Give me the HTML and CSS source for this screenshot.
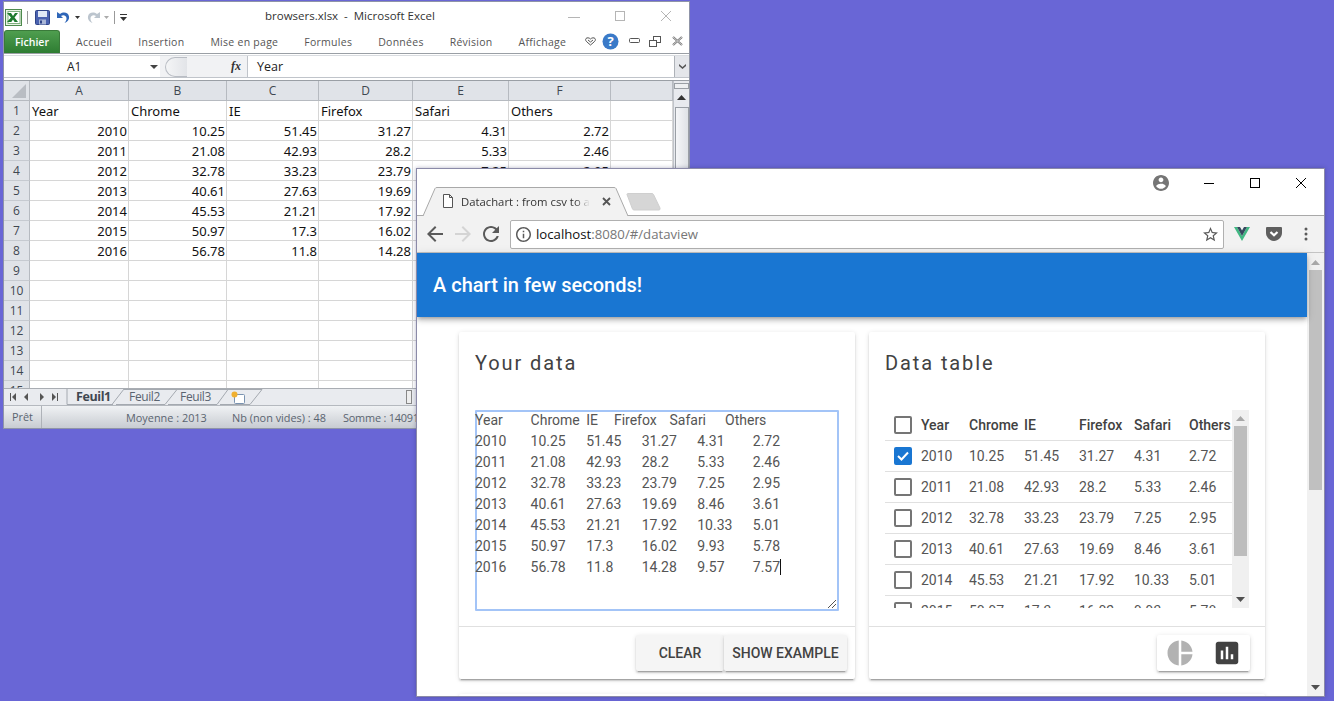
FILE: index.html
```html
<!DOCTYPE html>
<html lang="fr">
<head>
<meta charset="utf-8">
<title>Datachart</title>
<link rel="stylesheet" href="styles.css">
</head>
<body>
<section class="excel">
  <header class="x-title">
    <div class="x-qat">
      <svg class="x-logo" width="17" height="17" viewBox="0 0 17 17"><rect x=".5" y=".5" width="16" height="16" fill="#e8f2e4" stroke="#4e8a4e"/><rect x="3" y="2.500" width="12" height="12" fill="#fff" stroke="#7fb07f"/><path d="M2 4h4l2 3 2-3h3l-3.500 4.500L13 13H9.600L8 10.500 6.300 13H2l4-4.500z" fill="#1e7a2e"/></svg>
      <i class="x-sep"></i>
      <svg width="15" height="15" viewBox="0 0 15 15"><rect x=".5" y=".5" width="14" height="14" rx="1" fill="#4a62b0" stroke="#2f4488"/><rect x="3" y="1" width="9" height="6" fill="#dfe8f6"/><rect x="4" y="9.500" width="7" height="5" fill="#a9b6d6"/><rect x="5" y="10.500" width="2" height="3" fill="#2f4488"/></svg>
      <svg class="x-undo" width="14" height="13" viewBox="0 0 14 13"><path d="M1 1v6h6L5 5c2-1.500 5-1 5.500 2 .2 1.500-.5 3.500-2 5 3-1 5-3.500 4.500-6.500C12.500 2 8 0 4 3z" fill="#2f66b8"/></svg>
      <svg class="x-caret" width="5" height="3" viewBox="0 0 5 3"><path d="M0 0h5L2.500 3z" fill="#333"/></svg>
      <svg class="x-redo" width="14" height="13" viewBox="0 0 14 13"><path d="M13 1v6H7l2-2C7 3.500 4 4 3.500 7c-.2 1.500.5 3.500 2 5-3-1-5-3.500-4.500-6.500C1.500 2 6 0 10 3z" fill="#bcc5ce"/></svg>
      <svg class="x-caret" width="5" height="3" viewBox="0 0 5 3"><path d="M0 0h5L2.500 3z" fill="#aaa"/></svg>
      <i class="x-sep"></i>
      <svg class="x-custom" width="7" height="7" viewBox="0 0 7 7"><path d="M0 0h7v1H0zM0 3h7L3.500 7z" fill="#333"/></svg>
    </div>
    <div class="x-name">browsers.xlsx  -  Microsoft Excel</div>
    <div class="x-winctl">
      <svg width="12" height="12" viewBox="0 0 12 12"><path d="M0 7.500h12" stroke="#b5b5b5"/></svg>
      <svg width="10" height="10" viewBox="0 0 10 10"><rect x=".5" y=".5" width="9" height="9" fill="none" stroke="#b5b5b5"/></svg>
      <svg width="12" height="12" viewBox="0 0 12 12"><path d="M1 1l10 10M11 1L1 11" stroke="#b5b5b5"/></svg>
    </div>
  </header>
  <nav class="x-ribbon">
    <div class="x-file">Fichier</div>
    <div class="x-tabs">
      <span>Accueil</span><span>Insertion</span><span>Mise en page</span><span>Formules</span><span>Données</span><span>Révision</span><span>Affichage</span>
    </div>
    <div class="x-ribbon-ctl">
      <svg width="11" height="9" viewBox="0 0 11 9"><path d="M1 1.500C2 .5 4 .5 5.500 2 7 .5 9 .5 10 1.500c1 1.500 0 2.500-1 3.500L5.500 8 2 5C1 4 0 3 1 1.500zM3 3l2.500 2L8 3" fill="none" stroke="#555"/></svg>
      <svg class="r-help" width="17" height="17" viewBox="0 0 17 17"><circle cx="8.500" cy="8.500" r="8" fill="#3a7ac8"/><text x="8.500" y="13" text-anchor="middle" class="x-help-q">?</text></svg>
      <svg class="r-min" width="11" height="6" viewBox="0 0 11 6"><rect x=".5" y=".5" width="10" height="4" rx="1" fill="#fff" stroke="#555"/></svg>
      <svg class="r-res" width="12" height="11" viewBox="0 0 12 11"><rect x="4.500" y=".5" width="7" height="6" fill="#fff" stroke="#555"/><rect x=".5" y="4.500" width="7" height="6" fill="#fff" stroke="#555"/></svg>
      <svg class="r-close" width="11" height="10" viewBox="0 0 11 10"><path d="M1 1l9 8M10 1L1 9" stroke="#777" stroke-width="2.200"/><path d="M1 1l9 8M10 1L1 9" stroke="#eee" stroke-width=".7"/></svg>
    </div>
  </nav>
  <div class="x-formula">
    <div class="x-namebox"><span>A1</span><svg width="8" height="4" viewBox="0 0 8 4"><path d="M0 0h8L4 4z" fill="#444"/></svg></div>
    <div class="x-fx-wrap"><i class="x-pill"></i><em class="x-fx">fx</em></div>
    <div class="x-input">Year</div>
    <div class="x-expand"><svg width="9" height="5" viewBox="0 0 9 5"><path d="M1 0l3.500 3L8 0v2L4.500 5 1 2z" fill="#555"/></svg></div>
  </div>
  <div class="x-body">
    <div class="x-grid">
      <div class="hd corner"><svg width="14" height="14" viewBox="0 0 14 14"><path d="M14 0v14H0z" fill="#b9bdc3"/></svg></div>
      <div class="hd">A</div><div class="hd">B</div><div class="hd">C</div><div class="hd">D</div><div class="hd">E</div><div class="hd">F</div><div class="hd"></div>

      <div class="rh">1</div><div class="c">Year</div><div class="c">Chrome</div><div class="c">IE</div><div class="c">Firefox</div><div class="c">Safari</div><div class="c">Others</div><div class="c"></div>
      <div class="rh">2</div><div class="c n">2010</div><div class="c n">10.25</div><div class="c n">51.45</div><div class="c n">31.27</div><div class="c n">4.31</div><div class="c n">2.72</div><div class="c"></div>
      <div class="rh">3</div><div class="c n">2011</div><div class="c n">21.08</div><div class="c n">42.93</div><div class="c n">28.2</div><div class="c n">5.33</div><div class="c n">2.46</div><div class="c"></div>
      <div class="rh">4</div><div class="c n">2012</div><div class="c n">32.78</div><div class="c n">33.23</div><div class="c n">23.79</div><div class="c n">7.25</div><div class="c n">2.95</div><div class="c"></div>
      <div class="rh">5</div><div class="c n">2013</div><div class="c n">40.61</div><div class="c n">27.63</div><div class="c n">19.69</div><div class="c n">8.46</div><div class="c n">3.61</div><div class="c"></div>
      <div class="rh">6</div><div class="c n">2014</div><div class="c n">45.53</div><div class="c n">21.21</div><div class="c n">17.92</div><div class="c n">10.33</div><div class="c n">5.01</div><div class="c"></div>
      <div class="rh">7</div><div class="c n">2015</div><div class="c n">50.97</div><div class="c n">17.3</div><div class="c n">16.02</div><div class="c n">9.93</div><div class="c n">5.78</div><div class="c"></div>
      <div class="rh">8</div><div class="c n">2016</div><div class="c n">56.78</div><div class="c n">11.8</div><div class="c n">14.28</div><div class="c n">9.57</div><div class="c n">7.57</div><div class="c"></div>
      <div class="rh">9</div><div class="c"></div><div class="c"></div><div class="c"></div><div class="c"></div><div class="c"></div><div class="c"></div><div class="c"></div>
      <div class="rh">10</div><div class="c"></div><div class="c"></div><div class="c"></div><div class="c"></div><div class="c"></div><div class="c"></div><div class="c"></div>
      <div class="rh">11</div><div class="c"></div><div class="c"></div><div class="c"></div><div class="c"></div><div class="c"></div><div class="c"></div><div class="c"></div>
      <div class="rh">12</div><div class="c"></div><div class="c"></div><div class="c"></div><div class="c"></div><div class="c"></div><div class="c"></div><div class="c"></div>
      <div class="rh">13</div><div class="c"></div><div class="c"></div><div class="c"></div><div class="c"></div><div class="c"></div><div class="c"></div><div class="c"></div>
      <div class="rh">14</div><div class="c"></div><div class="c"></div><div class="c"></div><div class="c"></div><div class="c"></div><div class="c"></div><div class="c"></div>
      <div class="rh">15</div><div class="c"></div><div class="c"></div><div class="c"></div><div class="c"></div><div class="c"></div><div class="c"></div><div class="c"></div>
    </div>
    <div class="x-vscroll">
      <i class="x-split"></i>
      <svg class="x-up" width="9" height="5" viewBox="0 0 9 5"><path d="M4.500 0L9 5H0z" fill="#333"/></svg>
      <i class="x-thumb"></i>
    </div>
  </div>
  <div class="x-sheets">
    <svg class="x-slants" width="270" height="16" viewBox="0 0 270 16"><path d="M63 0V15.500H108L120 0M108 15.500H109M120 .5H173L161 15.500H112M173 .5H224L213 15.500H164M224 .5H258L246 15.500H216" fill="none" stroke="#a4a9b0"/></svg>
    <div class="x-nav">
      <svg width="50" height="8" viewBox="0 0 50 8"><path d="M1 0h1v8H1zM7 0v8L3 4zM19 0v8l-4-4zM31 0v8l4-4zM43 0v8l4-4zM48 0h1v8h-1z" fill="#555"/></svg>
    </div>
    <span class="x-sheet active">Feuil1</span>
    <span class="x-sheet">Feuil2</span>
    <span class="x-sheet">Feuil3</span>
    <span class="x-sheet x-new"><svg width="14" height="13" viewBox="0 0 14 13"><rect x="3.500" y="3.500" width="10" height="9" rx="1" fill="#fff" stroke="#7a93b0"/><circle cx="3.500" cy="3.500" r="3" fill="#f0b030"/></svg></span>
    <i class="x-hthumb"></i>
  </div>
  <footer class="x-status">
    <span class="x-ready">Prêt</span>
    <span class="x-avg">Moyenne : 2013</span>
    <span class="x-count">Nb (non vides) : 48</span>
    <span class="x-sum">Somme : 14091</span>
  </footer>
</section>

<section class="chrome">
  <div class="tabstrip">
    <div class="tab">
      <svg class="tab-bg" width="206" height="29" viewBox="0 0 206 29"><path d="M0 29L12 1.500Q12.500 .5 14 .5H191Q192.500 .5 193 1.500L205 29" fill="#f2f2f2" stroke="#a9a9a9"/></svg>
      <svg class="tab-doc" width="12" height="14" viewBox="0 0 12 14"><path d="M1.500 .5h6l3 3v10h-9zM7.500 .5v3h3" fill="#fff" stroke="#555"/></svg>
      <span class="tab-title">Datachart : from csv to a</span>
      <svg class="tab-close" width="9" height="9" viewBox="0 0 9 9"><path d="M1 1l7 7M8 1L1 8" stroke="#555" stroke-width="1.800"/></svg>
    </div>
    <svg class="newtab" width="35" height="18" viewBox="0 0 35 18"><path d="M1 1.500Q1 .5 2 .5H26Q27 .5 27.500 1.500L34 15Q34.500 17 33 17H8Q7 17 6.500 16z" fill="#d6d6d6" stroke="#cfcfcf"/></svg>
    <div class="winctl">
      <svg class="w-user" width="16" height="16" viewBox="2 2 20 20"><path d="M12 2C6.480 2 2 6.480 2 12s4.480 10 10 10 10-4.480 10-10S17.520 2 12 2zm0 3c1.660 0 3 1.340 3 3s-1.340 3-3 3-3-1.340-3-3 1.340-3 3-3zm0 14.200c-2.500 0-4.710-1.280-6-3.220.03-1.990 4-3.080 6-3.080 1.990 0 5.970 1.090 6 3.080-1.290 1.940-3.500 3.220-6 3.220z" fill="#757575"/></svg>
      <svg class="w-min" width="10" height="10" viewBox="0 0 10 10"><path d="M0 5.500h10" stroke="#000"/></svg>
      <svg class="w-max" width="10" height="10" viewBox="0 0 10 10"><rect x=".5" y=".5" width="9" height="9" fill="none" stroke="#000"/></svg>
      <svg class="w-close" width="10" height="10" viewBox="0 0 10 10"><path d="M0 0l10 10M10 0L0 10" stroke="#000"/></svg>
    </div>
  </div>
  <div class="toolbar">
    <svg width="20" height="20" viewBox="2 2 20 20" class="t-back"><path d="M20 11H7.830l5.590-5.590L12 4l-8 8 8 8 1.410-1.410L7.830 13H20v-2z" fill="#5a5a5a"/></svg>
    <svg width="20" height="20" viewBox="2 2 20 20" class="t-fwd"><path d="M12 4l-1.410 1.410L16.170 11H4v2h12.170l-5.580 5.590L12 20l8-8z" fill="#d4d4d4"/></svg>
    <svg width="20" height="20" viewBox="2 2 20 20" class="t-reload"><path d="M17.650 6.350C16.200 4.900 14.210 4 12 4c-4.420 0-7.990 3.580-7.990 8s3.570 8 7.990 8c3.730 0 6.840-2.550 7.730-6h-2.080c-.82 2.330-3.040 4-5.650 4-3.310 0-6-2.690-6-6s2.690-6 6-6c1.660 0 3.140.69 4.220 1.780L13 11h7V4l-2.350 2.350z" fill="#5a5a5a"/></svg>
    <div class="omnibox">
      <svg width="15" height="15" viewBox="2 2 20 20"><path d="M11 7h2v2h-2zm0 4h2v6h-2zm1-9C6.480 2 2 6.480 2 12s4.480 10 10 10 10-4.480 10-10S17.520 2 12 2zm0 18c-4.410 0-8-3.590-8-8s3.590-8 8-8 8 3.590 8 8-3.590 8-8 8z" fill="#5a5a5a"/></svg>
      <span class="url"><b>localhost</b>:8080/#/dataview</span>
      <svg class="star" width="15" height="15" viewBox="2 2 20 20"><path d="M22 9.240l-7.190-.62L12 2 9.190 8.630 2 9.240l5.460 4.730L5.820 21 12 17.270 18.180 21l-1.630-7.030L22 9.240zM12 15.400l-3.760 2.270 1-4.280-3.320-2.880 4.380-.38L12 6.100l1.710 4.040 4.380.38-3.320 2.880 1 4.280L12 15.400z" fill="#5a5a5a"/></svg>
    </div>
    <svg class="t-vue" width="16" height="14" viewBox="0 0 16 14"><path d="M0 0h3l5 9 5-9h3L8 14z" fill="#41b883"/><path d="M3 0h3l2 3.500L10 0h3L8 9z" fill="#35495e"/></svg>
    <svg class="t-pocket" width="16" height="14" viewBox="0 0 16 14"><path d="M1 0h14q1 0 1 1v5c0 4-4 8-8 8s-8-4-8-8V1q0-1 1-1z" fill="#5f5f5f"/><path d="M4.500 5L8 8.300 11.500 5" fill="none" stroke="#fff" stroke-width="2.200"/></svg>
    <svg class="t-menu" width="4" height="14" viewBox="0 0 4 14"><circle cx="2" cy="2" r="1.500" fill="#5a5a5a"/><circle cx="2" cy="7" r="1.500" fill="#5a5a5a"/><circle cx="2" cy="12" r="1.500" fill="#5a5a5a"/></svg>
  </div>
  <div class="viewport">
    <div class="page">
      <div class="appbar">A chart in few seconds!</div>
      <main class="cards">
        <article class="card">
          <h2 class="card-title">Your data</h2>
          <div class="card-body data-body">
            <div class="datatext">Year	Chrome	IE	Firefox	Safari	Others
2010	10.25	51.45	31.27	4.31	2.72
2011	21.08	42.93	28.2	5.33	2.46
2012	32.78	33.23	23.79	7.25	2.95
2013	40.61	27.63	19.69	8.46	3.61
2014	45.53	21.21	17.92	10.33	5.01
2015	50.97	17.3	16.02	9.93	5.78
2016	56.78	11.8	14.28	9.57	7.57<i class="caret"></i><svg class="grip" width="10" height="10" viewBox="0 0 10 10"><path d="M9 1L1 9M9 5L5 9" stroke="#555"/></svg></div>
          </div>
          <div class="card-actions">
            <button class="btn btn-clear">Clear</button>
            <button class="btn btn-example">Show example</button>
          </div>
        </article>
        <article class="card">
          <h2 class="card-title">Data table</h2>
          <div class="card-body table-body">
            <div class="tablewrap">
              <div class="trow thead"><i class="cb"></i><span>Year</span><span>Chrome</span><span>IE</span><span>Firefox</span><span>Safari</span><span>Others</span></div>
              <div class="trow"><i class="cb on"><svg width="14" height="14" viewBox="0 0 14 14"><path d="M2 7l3.500 3.500L12 3.500" fill="none" stroke="#fff" stroke-width="2"/></svg></i><span>2010</span><span>10.25</span><span>51.45</span><span>31.27</span><span>4.31</span><span>2.72</span></div>
              <div class="trow"><i class="cb"></i><span>2011</span><span>21.08</span><span>42.93</span><span>28.2</span><span>5.33</span><span>2.46</span></div>
              <div class="trow"><i class="cb"></i><span>2012</span><span>32.78</span><span>33.23</span><span>23.79</span><span>7.25</span><span>2.95</span></div>
              <div class="trow"><i class="cb"></i><span>2013</span><span>40.61</span><span>27.63</span><span>19.69</span><span>8.46</span><span>3.61</span></div>
              <div class="trow"><i class="cb"></i><span>2014</span><span>45.53</span><span>21.21</span><span>17.92</span><span>10.33</span><span>5.01</span></div>
              <div class="trow"><i class="cb"></i><span>2015</span><span>50.97</span><span>17.3</span><span>16.02</span><span>9.93</span><span>5.78</span></div>
            </div>
            <div class="tscroll">
              <svg width="9" height="5" viewBox="0 0 9 5"><path d="M4.500 0L9 5H0z" fill="#a8a8a8"/></svg>
              <i class="tthumb"></i>
              <svg class="tdown" width="9" height="5" viewBox="0 0 9 5"><path d="M0 0h9L4.500 5z" fill="#505050"/></svg>
            </div>
          </div>
          <div class="card-actions">
            <div class="toggle">
              <svg width="30" height="30" viewBox="0 0 24 24"><path d="M11 2v20c-5.070-.5-9-4.790-9-10s3.930-9.500 9-10zm2.030 0v8.990H22c-.47-4.740-4.240-8.520-8.970-8.990zm0 11.010V22c4.740-.47 8.500-4.250 8.970-8.990h-8.970z" fill="#b2b2b2"/></svg>
              <svg width="30" height="30" viewBox="0 0 24 24"><path d="M19 3H5c-1.100 0-2 .9-2 2v14c0 1.100.9 2 2 2h14c1.100 0 2-.9 2-2V5c0-1.100-.9-2-2-2zM9 17H7v-7h2v7zm4 0h-2V7h2v10zm4 0h-2v-4h2v4z" fill="#424242"/></svg>
            </div>
          </div>
        </article>
      </main>
      <div class="card next-card"></div>
    </div>
    <div class="pscroll">
      <svg width="9" height="5" viewBox="0 0 9 5"><path d="M4.500 0L9 5H0z" fill="#a8a8a8"/></svg>
      <i class="pthumb"></i>
      <svg class="pdown" width="9" height="5" viewBox="0 0 9 5"><path d="M0 0h9L4.500 5z" fill="#505050"/></svg>
    </div>
  </div>
</section>
</body>
</html>
```
FILE: styles.css
```css
* { box-sizing: border-box; }
html, body { margin: 0; height: 100%; overflow: hidden; }
body { background: #6966d6; width: 1334px; height: 701px; position: relative; font-family: "Roboto", sans-serif; }
i, em { display: block; font-style: normal; }
svg { display: block; flex: none; }

/* Excel window */
.excel {
  position: absolute; left: 3px; top: 1px; width: 687px; height: 428px;
  background: #fff; border: 1px solid #8f94a8; display: flex; flex-direction: column;
  font-family: "Open Sans", "Liberation Sans", sans-serif; color: #3b3b3b; overflow: hidden;
}
.x-title { height: 28px; display: flex; align-items: center; position: relative; flex: none; }
.x-qat { display: flex; align-items: center; padding-left: 1px; padding-top: 3px; }
.x-sep { width: 1px; height: 13px; background: #999; margin: 0 7px 0 5px; }
.x-undo { margin-left: 6px; margin-right: 2px; }
.x-caret { margin-left: 3px; }
.x-redo { margin-left: 7px; }
.x-custom { margin-left: -2px; }
.x-name { position: absolute; left: 261px; top: 6px; font-size: 11.5px; color: #333; white-space: pre; }
.x-winctl { position: absolute; left: 564px; top: 8px; display: flex; align-items: center; gap: 35px; }
.x-ribbon { height: 24px; display: flex; align-items: flex-end; flex: none; border-bottom: 1px solid #9a9fa5; position: relative; }
.x-file {
  width: 56px; height: 23px; background: linear-gradient(#4f9e4f, #2e7d32); border: 1px solid #3a7a3a; border-bottom: 0;
  border-radius: 3px 3px 0 0; color: #fff; font-size: 10.5px; font-weight: 600; text-align: center; line-height: 22px;
}
.x-tabs { display: flex; gap: 26px; padding-left: 16px; font-size: 10.5px; line-height: 22px; color: #555; letter-spacing: .27px; }
.x-ribbon-ctl { position: absolute; left: 581px; top: 1px; display: flex; align-items: center; height: 20px; }
.r-help { margin-left: 6px; }
.r-min { margin-left: 10px; }
.r-res { margin-left: 9px; }
.r-close { margin-left: 11px; }
.x-help-q { font: 700 13px "Open Sans", sans-serif; fill: #fff; }
.x-formula { height: 23px; display: flex; flex: none; margin-top: 1px; background: #fff; border-top: 1px solid #d9dce0; border-bottom: 1px solid #c0c4ca; }
.x-namebox { width: 156px; display: flex; align-items: center; font-size: 12px; padding-left: 63px; padding-right: 2px; justify-content: space-between; color: #222; }
.x-fx-wrap { width: 88px; display: flex; align-items: center; justify-content: space-between; background: #f1f2f4; border-right: 1px solid #c0c4ca; padding: 0 6px 0 5px; }
.x-pill { width: 22px; height: 20px; border-radius: 12px 0 0 12px; background: linear-gradient(90deg, #f4f5f6, #e2e4e8); border: 1px solid #b9bdc4; border-right: 0; }
.x-fx { font: italic 700 12px "Liberation Serif", serif; color: #333; }
.x-input { flex: 1; font-size: 12.5px; padding-left: 9px; line-height: 21px; color: #222; }
.x-expand { width: 15px; display: flex; align-items: center; justify-content: center; background: #e4e6ea; border-left: 1px solid #aeb2b8; }
.x-body { flex: 1; display: flex; min-height: 0; margin-top: 2px; border-top: 1px solid #9a9fa5; overflow: hidden; }
.x-grid {
  display: grid; grid-template-columns: 26px 99px 98px 92px 94px 96px 102px 62px; grid-auto-rows: 20px;
  font-family: "Noto Sans", sans-serif; font-size: 13px; color: #111; align-content: start; flex: none;
}
.hd { background: #e0e3e8; border-right: 1px solid #b6bac0; border-bottom: 1px solid #b6bac0; text-align: center; line-height: 19px; font-size: 12px; color: #3f4750; font-family: "Open Sans", sans-serif; }
.corner { display: flex; align-items: flex-end; justify-content: flex-end; padding: 0 3px 2px 0; }
.rh { background: #e0e3e8; border-right: 1px solid #b6bac0; border-bottom: 1px solid #c6cad0; text-align: center; line-height: 19px; font-size: 12px; color: #3f4750; font-family: "Open Sans", sans-serif; }
.c { border-right: 1px solid #d6d6d6; border-bottom: 1px solid #d6d6d6; padding: 0 1px 0 2px; line-height: 20px; white-space: nowrap; overflow: hidden; }
.n { text-align: right; }
.x-vscroll { flex: 1; background: #e8eaee; border-left: 1px solid #c0c4ca; display: flex; flex-direction: column; align-items: center; }
.x-split { width: 15px; height: 6px; margin-top: 2px; background: #eef0f2; border: 1px solid #9a9fa5; }
.x-up { margin-top: 6px; }
.x-thumb { width: 14px; flex: 1; margin-top: 7px; background: linear-gradient(90deg, #f5f6f8, #dfe2e6); border: 1px solid #9a9fa5; }
.x-sheets { height: 17px; flex: none; display: flex; background: #e9ebef; border-top: 1px solid #a9adb3; font-size: 12px; line-height: 15px; color: #5a6470; position: relative; }
.x-slants { position: absolute; left: 0; top: 0; }
.x-nav { width: 63px; padding: 4px 0 0 5px; position: relative; }
.x-sheet { width: 51px; text-align: center; letter-spacing: -.4px; position: relative; }
.x-sheet.active { width: 51px; font-weight: 700; color: #3f4750; margin-right: 1px; padding-left: 9px; text-align: left; font-size: 12.5px; }
.x-new { display: flex; justify-content: center; align-items: center; width: 37px; padding-right: 3px; }
.x-hthumb { position: absolute; left: 402px; top: 1px; width: 6px; height: 14px; background: #eee; border: 1px solid #888; }
.x-status { height: 23px; flex: none; display: flex; align-items: center; background: linear-gradient(#f0f2f4, #c8ccd2); font-size: 10.9px; color: #5a6470; position: relative; border-top: 1px solid #b5b9bf; white-space: nowrap; }
.x-ready { width: 38px; height: 100%; padding-left: 8px; line-height: 21px; border-right: 1px solid #aeb2b8; flex: none; }
.x-avg { margin-left: 84px; width: 106px; flex: none; }
.x-count { width: 111px; flex: none; }
.x-sum { flex: none; letter-spacing: -.2px; }

/* Chrome window */
.chrome {
  position: absolute; left: 416px; top: 168px; width: 909px; height: 529px;
  border: 1px solid #8b8aa8; background: #fff; display: flex; flex-direction: column; overflow: hidden;
  box-shadow: 0 0 4px rgba(40,40,90,.35);
}
.tabstrip { height: 47px; flex: none; background: #fff; border-bottom: 1px solid #a9a9a9; position: relative; display: flex; align-items: flex-end; padding-left: 6px; }
.tab { width: 206px; height: 29px; position: relative; display: flex; align-items: center; margin-bottom: -1px; padding: 0 0 1px 19px; font-family: "Open Sans", sans-serif; font-size: 11.3px; color: #333; }
.tab-bg { position: absolute; left: 0; top: 0; }
.tab-doc { position: relative; margin-right: 7px; }
.tab-title { position: relative; width: 129px; white-space: nowrap; overflow: hidden; -webkit-mask-image: linear-gradient(90deg, #000 88%, transparent); mask-image: linear-gradient(90deg, #000 88%, transparent); }
.tab-close { position: relative; margin-left: 12px; }
.newtab { margin: 0 0 4px -3px; }
.winctl { position: absolute; top: 6px; left: 736px; display: flex; align-items: center; height: 16px; }
.w-min { margin-left: 35px; }
.w-max { margin-left: 36px; }
.w-close { margin-left: 36px; }
.toolbar { height: 37px; flex: none; background: #f2f2f2; border-bottom: 1px solid #c4c4c4; display: flex; align-items: center; padding-left: 8px; }
.t-fwd { margin-left: 8px; }
.t-reload { margin-left: 8px; }
.omnibox { width: 714px; height: 29px; margin-left: 9px; background: #fff; border: 1px solid #b0b0b0; border-radius: 2px; display: flex; align-items: center; padding: 0 5px 0 5px; }
.url { font-family: "Open Sans", sans-serif; font-size: 13.2px; color: #777; margin-left: 5px; flex: 1; }
.url b { font-weight: 400; color: #111; }
.t-vue { margin-left: 10px; }
.t-pocket { margin-left: 16px; }
.t-menu { margin-left: 22px; }
.viewport { flex: 1; display: flex; min-height: 0; }
.page { width: 890px; flex: none; background: #fff; display: flex; flex-direction: column; }
.appbar { height: 64px; flex: none; background: #1976d2; color: #fff; font-size: 20px; font-weight: 500; line-height: 64px; padding-left: 16px; box-shadow: 0 2px 4px -1px rgba(0,0,0,.25), 0 4px 5px 0 rgba(0,0,0,.14), 0 1px 10px 0 rgba(0,0,0,.1); position: relative; }
.cards { display: flex; gap: 14px; padding: 15px 0 0 42px; flex: none; }
.card { width: 396px; height: 347px; background: #fff; border-radius: 2px; box-shadow: 0 3px 1px -2px rgba(0,0,0,.2), 0 2px 2px 0 rgba(0,0,0,.14), 0 1px 5px 0 rgba(0,0,0,.12); display: flex; flex-direction: column; }
.next-card { margin: 15px 0 0 42px; flex: none; width: 806px; }
.card-title { margin: 0; height: 65px; padding: 18px 16px 0; font-size: 20px; font-weight: 400; letter-spacing: 1.9px; line-height: 26px; color: #424242; flex: none; }
.card-body { height: 230px; flex: none; padding: 13px 16px 0; border-bottom: 1px solid #e0e0e0; }
.datatext { height: 201px; box-shadow: inset 0 0 0 2px #a3c4f7; border-radius: 1px; white-space: pre; font-size: 14px; line-height: 21px; color: #555; position: relative; }
.caret { display: inline-block; width: 1px; height: 16px; background: #111; vertical-align: -3px; }
.grip { position: absolute; right: 2px; bottom: 2px; }
.card-actions { flex: 1; display: flex; justify-content: flex-end; padding: 8px 8px 0 0; }
.btn { height: 36px; border: 0; background: #f5f5f5; color: #424242; font: 500 14px "Roboto", sans-serif; text-transform: uppercase; border-radius: 2px; padding: 0; box-shadow: 0 3px 1px -2px rgba(0,0,0,.2), 0 2px 2px 0 rgba(0,0,0,.14), 0 1px 5px 0 rgba(0,0,0,.12); }
.btn-clear { width: 88px; }
.btn-example { width: 123px; }
.table-body { display: flex; padding-top: 13px; padding-bottom: 17px; }
.tablewrap { width: 347px; height: 198px; overflow: hidden; flex: none; }
.trow { display: grid; grid-template-columns: 36px 48px 55px 55px 55px 55px 43px; height: 31px; align-items: center; border-bottom: 1px solid #e0e0e0; font-size: 14px; color: #555; white-space: nowrap; }
.thead { font-weight: 500; color: #424242; }
.thead span { margin-top: -1px; }
.thead .cb { margin-top: -1px; }
.cb { width: 18px; height: 18px; margin-left: 9px; border: 2px solid #757575; border-radius: 2px; }
.cb.on { background: #1976d2; border-color: #1976d2; display: flex; align-items: center; justify-content: center; }
.tscroll { width: 17px; height: 198px; background: #f0f0f0; display: flex; flex-direction: column; align-items: center; padding-top: 6px; }
.tthumb { width: 13px; height: 130px; background: #bdbdbd; margin-top: 5px; flex: none; }
.tdown { margin-top: auto; margin-bottom: 6px; }
.toggle { width: 93px; height: 36px; margin-right: 7px; background: #fff; border-radius: 2px; display: flex; align-items: center; justify-content: center; gap: 17px; box-shadow: 0 3px 1px -2px rgba(0,0,0,.2), 0 2px 2px 0 rgba(0,0,0,.14), 0 1px 5px 0 rgba(0,0,0,.12); }
.pscroll { width: 17px; flex: none; background: #f1f1f1; display: flex; flex-direction: column; align-items: center; padding-top: 7px; }
.pthumb { width: 13px; height: 220px; background: #c0c0c0; margin-top: 5px; flex: none; }
.pdown { margin-top: auto; margin-bottom: 6px; }
```
